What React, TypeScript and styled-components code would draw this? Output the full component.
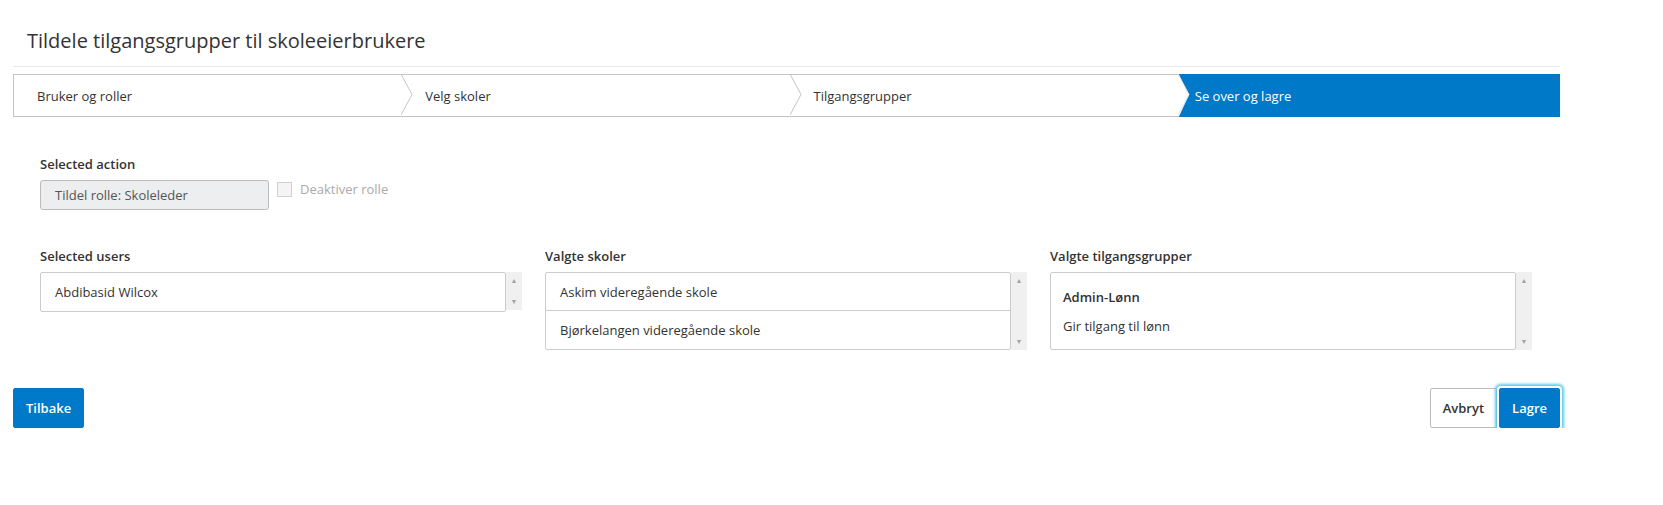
import React from 'react';
import styled, { createGlobalStyle } from 'styled-components';

const Global = createGlobalStyle`
  body { margin: 0; background: #fff; font-family: "Open Sans", "Liberation Sans", sans-serif; color: #333; }
`;

const Page = styled.div`
  padding: 0 103px 0 13px;
  width: 1547px;
`;

const Title = styled.h1`
  margin: 0;
  padding: 27px 14px 12px;
  font-size: 20px;
  font-weight: 400;
  color: #333;
  border-bottom: 1px solid #e8e8e8;
`;

const Stepper = styled.div`
  display: flex;
  margin-top: 7px;
  height: 41px;
  border: 1px solid #c4c4c4;
  border-right: none;
`;

const Step = styled.div<{ $active?: boolean }>`
  position: relative;
  flex: 1;
  display: flex;
  align-items: center;
  padding-left: ${(p) => (p.$active ? '16px' : '23px')};
  font-size: 13px;
  color: ${(p) => (p.$active ? '#fff' : '#333')};
  background: ${(p) => (p.$active ? '#0079c9' : '#fff')};
  margin: ${(p) => (p.$active ? '-1px 0' : '0')};
  clip-path: ${(p) => (p.$active ? 'polygon(0 0,100% 0,100% 100%,0 100%,10px 50%)' : 'none')};
`;

const Chevron = styled.svg`
  position: absolute;
  right: -11px;
  top: -1px;
  z-index: 1;
`;

const Body = styled.div`
  padding: 38px 0 0 27px;
`;

const Label = styled.div`
  font-size: 13px;
  font-weight: 600;
  color: #333;
  margin-bottom: 7px;
`;

const ActionRow = styled.div`
  display: flex;
  align-items: center;
  gap: 8px;
`;

const ReadInput = styled.div`
  width: 229px;
  height: 30px;
  box-sizing: border-box;
  border: 1px solid #bbb;
  border-radius: 3px;
  background: #eceeef;
  font-size: 13px;
  color: #555;
  display: flex;
  align-items: center;
  padding-left: 14px;
`;

const Check = styled.span`
  width: 13px;
  height: 13px;
  border: 1px solid #d0d0d0;
  background: #f4f4f4;
  margin-top: -12px;
`;

const CheckLabel = styled.span`
  font-size: 13px;
  color: #aaa;
  margin-top: -12px;
`;

const Columns = styled.div`
  display: grid;
  grid-template-columns: repeat(3, 482px);
  gap: 23px;
  margin-top: 37px;
`;

const ListWrap = styled.div`
  display: flex;
`;

const List = styled.div<{ $h: number }>`
  flex: 1;
  height: ${(p) => p.$h}px;
  box-sizing: border-box;
  border: 1px solid #ccc;
  border-radius: 2px;
`;

const Item = styled.div<{ $last?: boolean }>`
  height: 38px;
  display: flex;
  align-items: center;
  padding-left: 14px;
  font-size: 13px;
  color: #333;
  border-bottom: ${(p) => (p.$last ? 'none' : '1px solid #ccc')};
  box-sizing: border-box;
`;

const GroupBox = styled.div`
  padding: 10px 12px;
  font-size: 13px;
  line-height: 29px;
`;

const Scroll = styled.div<{ $h: number }>`
  width: 16px;
  height: ${(p) => p.$h}px;
  background: #f0f0f0;
  display: flex;
  flex-direction: column;
  justify-content: space-between;
  align-items: center;
  padding: 5px 0;
  box-sizing: border-box;
  color: #a3a3a3;
  font-size: 7px;
  line-height: 7px;
`;

const Footer = styled.div`
  display: flex;
  justify-content: space-between;
  margin-top: 38px;
`;

const Btn = styled.button<{ $primary?: boolean; $focus?: boolean }>`
  height: 40px;
  padding: 0 12px;
  font-family: inherit;
  font-size: 13px;
  font-weight: 600;
  border-radius: 2px;
  border: 1px solid ${(p) => (p.$primary ? '#0079c9' : '#bbb')};
  background: ${(p) => (p.$primary ? '#0079c9' : '#fff')};
  color: ${(p) => (p.$primary ? '#fff' : '#333')};
  box-shadow: ${(p) => (p.$focus ? '0 0 0 2px #fff, 0 0 3px 4px #5bc8ec' : 'none')};
`;

const Right = styled.div`
  display: flex;
  gap: 2px;
`;

function Scrollbar({ h }: { h: number }) {
  return (
    <Scroll $h={h}>
      <span>▲</span>
      <span>▼</span>
    </Scroll>
  );
}

const steps = ['Bruker og roller', 'Velg skoler', 'Tilgangsgrupper', 'Se over og lagre'];

export default function App() {
  return (
    <Page>
      <Global />
      <Title>Tildele tilgangsgrupper til skoleeierbrukere</Title>
      <Stepper>
        {steps.map((s, i) => (
          <Step key={s} $active={i === 3}>
            {s}
            {i < 2 && (
              <Chevron width="12" height="41" viewBox="0 0 12 41">
                <polyline points="0,0 11,20.5 0,41" fill="#fff" stroke="#c4c4c4" strokeWidth="1" />
              </Chevron>
            )}
            {i === 2 && (
              <Chevron width="12" height="41" viewBox="0 0 12 41">
                <polyline points="0,0 11,20.5 0,41" fill="#fff" stroke="#e0e0e0" strokeWidth="1" />
              </Chevron>
            )}
          </Step>
        ))}
      </Stepper>
      <Body>
        <Label>Selected action</Label>
        <ActionRow>
          <ReadInput>Tildel rolle: Skoleleder</ReadInput>
          <Check />
          <CheckLabel>Deaktiver rolle</CheckLabel>
        </ActionRow>
        <Columns>
          <div>
            <Label>Selected users</Label>
            <ListWrap>
              <List $h={40}>
                <Item $last>Abdibasid Wilcox</Item>
              </List>
              <Scrollbar h={38} />
            </ListWrap>
          </div>
          <div>
            <Label>Valgte skoler</Label>
            <ListWrap>
              <List $h={78}>
                <Item>Askim videregående skole</Item>
                <Item $last>Bjørkelangen videregående skole</Item>
              </List>
              <Scrollbar h={78} />
            </ListWrap>
          </div>
          <div>
            <Label>Valgte tilgangsgrupper</Label>
            <ListWrap>
              <List $h={78}>
                <GroupBox>
                  <div style={{ fontWeight: 600 }}>Admin-Lønn</div>
                  <div>Gir tilgang til lønn</div>
                </GroupBox>
              </List>
              <Scrollbar h={78} />
            </ListWrap>
          </div>
        </Columns>
      </Body>
      <Footer>
        <Btn $primary>Tilbake</Btn>
        <Right>
          <Btn>Avbryt</Btn>
          <Btn $primary $focus>Lagre</Btn>
        </Right>
      </Footer>
    </Page>
  );
}
